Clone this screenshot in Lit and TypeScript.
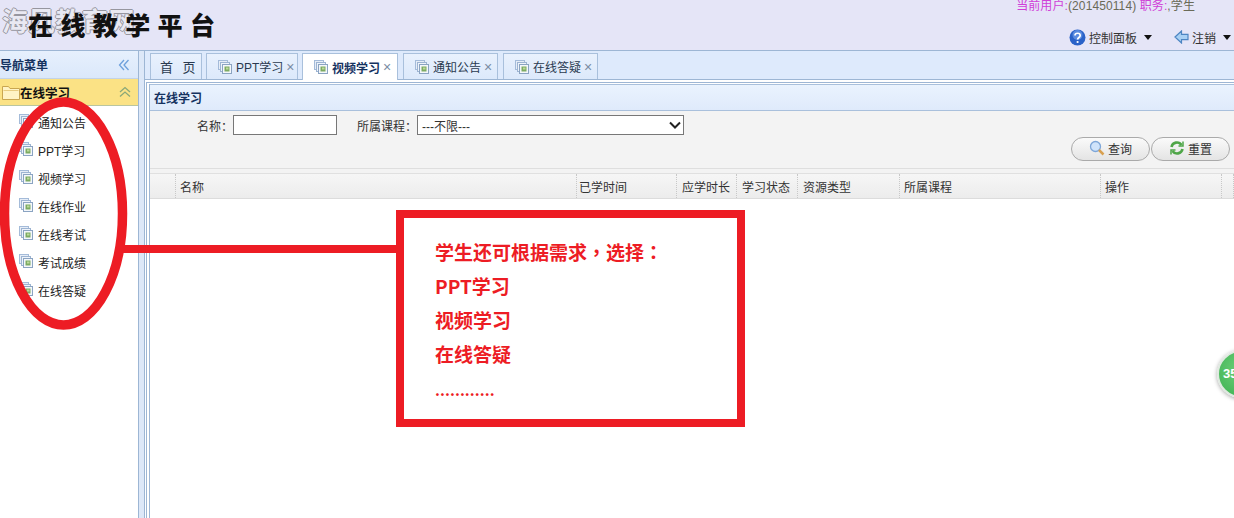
import { LitElement, html, css, svg } from "lit";
import { customElement } from "lit/decorators.js";

const pageIcon = svg`<svg class="pi" width="16" height="16" viewBox="0 0 16 16">
<rect x="1.5" y="1.5" width="9" height="9" fill="#e6edf7" stroke="#a4bbd9"/>
<rect x="3.5" y="3.5" width="9" height="9" fill="#eef3fa" stroke="#9db4d2"/>
<rect x="5.5" y="5.5" width="9" height="9" fill="#f4f7fb" stroke="#8ba4c2"/>
<rect x="7.5" y="7.5" width="5" height="5" fill="#7dab62"/>
<rect x="9" y="8.500" width="2.500" height="2" fill="#bcd99a"/></svg>`;

const tri = html`<i class="tri"></i>`;

const COLS: [string, number, number][] = [["", 26, 4], ["名称", 401, 4], ["已学时间", 100, 2], ["应学时长", 60, 5], ["学习状态", 61, 5], ["资源类型", 102, 5], ["所属课程", 201, 4], ["操作", 121, 4], ["", 12, 0]];
const MENU = ["通知公告", "PPT学习", "视频学习", "在线作业", "在线考试", "考试成绩", "在线答疑"];
const TABS: [string, number, boolean, number][] = [["PPT学习", 92, false, 4], ["视频学习", 96, true, 4], ["通知公告", 95, false, 5], ["在线答疑", 95, false, 5]];

@customElement("app-root")
export class AppRoot extends LitElement {
  static styles = css`
    :host { display: block; position: relative; width: 1234px; height: 518px; overflow: hidden; background: #fff; font-family: "Liberation Sans", "Noto Sans CJK SC", sans-serif; font-size: 12px; color: #222; }
    .header { height: 51px; box-sizing: border-box; background: #e5e5f7; border-bottom: 1px solid #9db6d4; display: flex; justify-content: space-between; position: relative; }
    .wm { position: absolute; left: 2px; top: 2px; height: 36px; font: 700 26px/36px "Noto Sans CJK SC", sans-serif; letter-spacing: .6px; color: #e9e9f2; text-shadow: 1px 0 #96969f, -1px 0 #96969f, 0 1px #96969f, 0 -1px #96969f; white-space: nowrap; }
    .brand { position: relative; z-index: 1; padding: 7px 0 0 28px; font: 900 25px/34px "Noto Sans CJK SC", sans-serif; letter-spacing: 7.4px; color: #111; white-space: nowrap; }
    .user { display: flex; flex-direction: column; align-items: flex-end; padding-right: 3px; }
    .who { line-height: 13px; color: #d040d8; margin-right: 36px; white-space: nowrap; letter-spacing: .1px; }
    .who span { color: #6a6a58; }
    .ctl { display: flex; align-items: center; margin-top: 12px; height: 24px; color: #333; white-space: nowrap; }
    .ctl svg { margin-right: 3px; }
    .ctl .b { display: flex; align-items: center; }
    .ctl .b + .b { margin-left: 22px; }
    .tri { display: inline-block; border: 4px solid transparent; border-top: 5px solid #111; border-bottom: 0; margin-left: 7px; }
    .body { display: flex; height: 467px; }
    .side { width: 139px; flex: none; box-sizing: border-box; border-right: 1px solid #9db6d4; background: #fff; }
    .nav-h { height: 28px; box-sizing: border-box; padding-right: 8px; background: linear-gradient(#e6f0fd, #dbe8fa); border-bottom: 1px solid #c3d3e6; display: flex; align-items: center; justify-content: space-between; font-weight: 700; color: #15325f; }
    .acc { height: 27px; box-sizing: border-box; padding: 0 7px 0 2px; background: #fbe285; border-bottom: 1px solid #b9c5a0; display: flex; align-items: center; font-weight: 700; color: #111; font-size: 12.5px; }
    .acc .grow { flex: 1; }
    .menu { padding-top: 2px; }
    .mi { height: 28px; display: flex; align-items: center; padding-left: 18px; gap: 4px; white-space: nowrap; }
    .mi .pi { margin-top: -3px; }
    .split { width: 6px; flex: none; background: #dde8f8; border-right: 1px solid #9db6d4; box-sizing: border-box; }
    .main { flex: 1; min-width: 0; display: flex; flex-direction: column; background: #fff; }
    .tabs { height: 29px; flex: none; box-sizing: border-box; background: #deeafc; padding: 2px 0 0 5px; display: flex; border-bottom: 1px solid #9db6d4; }
    .tab { height: 26px; box-sizing: border-box; border: 1px solid #a9c0dc; border-bottom: 0; background: linear-gradient(#e9f1fd, #dce9fb); display: flex; align-items: center; padding-left: 10px; gap: 3px; font-size: 12px; color: #2a3a50; white-space: nowrap; }
    .tab.home { width: 52px; font-size: 13px; letter-spacing: 3px; padding-left: 9px; }
    .tab.on { height: 27px; background: #fff; color: #15325f; font-weight: 700; }
    .x { color: #7a8ba3; font-weight: 400; font-size: 14px; line-height: 14px; }
    .content { flex: 1; margin: 2px 0 0 1px; border-left: 1px solid #9db6d4; border-top: 1px solid #9db6d4; padding: 1px 0 0 2px; display: flex; flex-direction: column; min-height: 0; }
    .inner { flex: 1; border-left: 1px solid #9db6d4; display: flex; flex-direction: column; min-height: 0; }
    .ptitle { height: 27px; box-sizing: border-box; flex: none; background: linear-gradient(#eaf3fe, #dfeafb); border-top: 1px solid #a9c0dc; border-bottom: 1px solid #a9c0dc; padding-left: 4px; display: flex; align-items: center; font-weight: 700; color: #15325f; }
    .form { height: 58px; flex: none; box-sizing: border-box; background: #f3f3f3; border-bottom: 1px solid #dedede; padding-top: 4px; }
    .row { display: flex; align-items: center; height: 20px; padding-left: 47px; color: #333; }
    .row input { width: 104px; height: 20px; box-sizing: border-box; border: 1px solid #777; background: #fff; margin: 0 20px 0 0; padding: 0; }
    .sel { width: 267px; height: 20px; box-sizing: border-box; border: 1px solid #777; background: #fff; padding-left: 4px; display: flex; align-items: center; justify-content: space-between; color: #333; }
    .btns { display: flex; justify-content: flex-end; gap: 1px; padding: 2px 4px 0 0; }
    .btn { width: 79px; height: 24px; box-sizing: border-box; border: 1px solid #aaa; border-radius: 12px; padding-bottom: 2px; background: linear-gradient(#fafafa, #e4e4e4); display: flex; align-items: center; justify-content: center; gap: 3px; color: #333; }
    .gap { height: 4px; flex: none; background: #f3f3f3; }
    .thead { display: flex; height: 26px; flex: none; box-sizing: border-box; background: linear-gradient(#f6f6f6, #ececec); border-top: 1px solid #e0e0e0; border-bottom: 1px solid #dcdcdc; }
    .th { box-sizing: border-box; border-right: 1px dotted #c8c8c8; display: flex; align-items: center; color: #333; white-space: nowrap; flex: none; }
    .ann { position: absolute; left: 0; top: 0; pointer-events: none; }
    .note { position: absolute; left: 396px; top: 210px; width: 349px; height: 217px; box-sizing: border-box; border: 8px solid #ed1c24; padding: 17px 0 0 31px; font: 700 19px/34px "Noto Sans CJK SC", sans-serif; color: #ed1c24; white-space: nowrap; }
    .note .p { font-family: "Noto Sans CJK TC", sans-serif; }
    .note .dots { font-size: 15px; letter-spacing: .1px; }
    .bubble { position: absolute; left: 1217px; top: 350px; width: 48px; height: 48px; box-sizing: border-box; border-radius: 50%; background: radial-gradient(circle at 50% 40%, #6ed07a, #3cb050); border: 2px solid #dfe9e0; box-shadow: 0 1px 4px rgba(0,0,0,.35); color: #fff; font: 700 13px/44px "Liberation Sans", sans-serif; padding-left: 4px; }
  `;

  render() {
    return html`
      <div class="header">
        <div class="brand">在线教学平台</div>
        <div class="wm">海风教育网</div>
        <div class="user">
          <div class="who">当前用户:<span>(201450114)</span> 职务:<span>,学生</span></div>
          <div class="ctl">
            <div class="b">
              <svg width="17" height="17" viewBox="0 0 17 17"><circle cx="8.5" cy="8.5" r="8" fill="#2a62c8"/><circle cx="8.5" cy="6" r="5" fill="#6f9ce8" opacity=".7"/><path d="M6 6.5c0-3 5.2-3 5.2 0 0 2-2.6 2-2.6 4" fill="none" stroke="#fff" stroke-width="1.7"/><circle cx="8.6" cy="13" r="1.1" fill="#fff"/></svg>
              控制面板${tri}
            </div>
            <div class="b">
              <svg width="15" height="14" viewBox="0 0 15 14"><path d="M1 7 7.5 1v3.3H14v5.4H7.5V13z" fill="#a8d0f4" stroke="#4d85c2" stroke-width="1.2"/></svg>
              注销${tri}
            </div>
          </div>
        </div>
      </div>
      <div class="body">
        <div class="side">
          <div class="nav-h">导航菜单
            <svg width="12" height="12" viewBox="0 0 12 12" fill="none" stroke="#6ea0dc" stroke-width="1.3"><path d="M6 1 1.5 6 6 11M10.500 1 6 6l4.500 5"/></svg>
          </div>
          <div class="acc">
            <svg width="18" height="15" viewBox="0 0 18 15"><path d="M.5 14.500V1.500h6l1.500 2h9.500v11z" fill="#fff3c4" stroke="#c9a650"/><path d="M1.500 5.500h15" stroke="#e8cc80"/></svg>
            <span>在线学习</span><span class="grow"></span>
            <svg width="12" height="12" viewBox="0 0 12 12" fill="none" stroke="#8aa878" stroke-width="1.3"><path d="M1 6 6 1.500 11 6M1 10.500 6 6l5 4.500"/></svg>
          </div>
          <div class="menu">${MENU.map(m => html`<div class="mi">${pageIcon}<span>${m}</span></div>`)}</div>
        </div>
        <div class="split"></div>
        <div class="main">
          <div class="tabs">
            <div class="tab home">首 页</div>
            ${TABS.map(([t, w, on, ml]) => html`<div class="tab ${on ? "on" : ""}" style="width:${w}px;margin-left:${ml}px">${pageIcon}<span>${t}</span><span class="x">×</span></div>`)}
          </div>
          <div class="content">
            <div class="inner">
              <div class="ptitle">在线学习</div>
              <div class="form">
                <div class="row">名称：<input type="text" />所属课程：<div class="sel">---不限---
                  <svg width="16" height="16" viewBox="0 0 16 16" fill="none" stroke="#222" stroke-width="2"><path d="M3 5.500 8 10.500 13 5.500"/></svg></div></div>
                <div class="btns">
                  <div class="btn"><svg width="16" height="16" viewBox="0 0 16 16"><circle cx="6.500" cy="6.500" r="5" fill="#cfe3fa" stroke="#7ea6d8" stroke-width="1.300"/><path d="m10 10 4.500 4.500" stroke="#d8a050" stroke-width="2.500"/></svg>查询</div>
                  <div class="btn"><svg width="16" height="16" viewBox="0 0 16 16" fill="none" stroke="#4fa648" stroke-width="2.600"><path d="M2.500 7a5.500 5.500 0 0 1 10-2"/><path d="M13.500 9a5.500 5.500 0 0 1-10 2"/><path d="M14 1.500v4.500h-4.500M2 14.500V10h4.500" stroke-width="1.500"/></svg>重置</div>
                </div>
              </div>
              <div class="gap"></div>
              <div class="thead">${COLS.map(([c, w, p]) => html`<div class="th" style="width:${w}px;padding-left:${p}px">${c}</div>`)}</div>
            </div>
          </div>
        </div>
      </div>
      <svg class="ann" width="1234" height="518">
        <ellipse cx="63.500" cy="213.500" rx="59" ry="111.500" fill="none" stroke="#ed1c24" stroke-width="9.500"/>
        <rect x="120" y="245" width="280" height="8" fill="#ed1c24"/>
      </svg>
      <div class="note">学生还可根据需求<span class="p">，</span>选择<span class="p">：</span><br />PPT学习<br />视频学习<br />在线答疑<br /><span class="dots">............</span></div>
      <div class="bubble">35</div>
    `;
  }
}
